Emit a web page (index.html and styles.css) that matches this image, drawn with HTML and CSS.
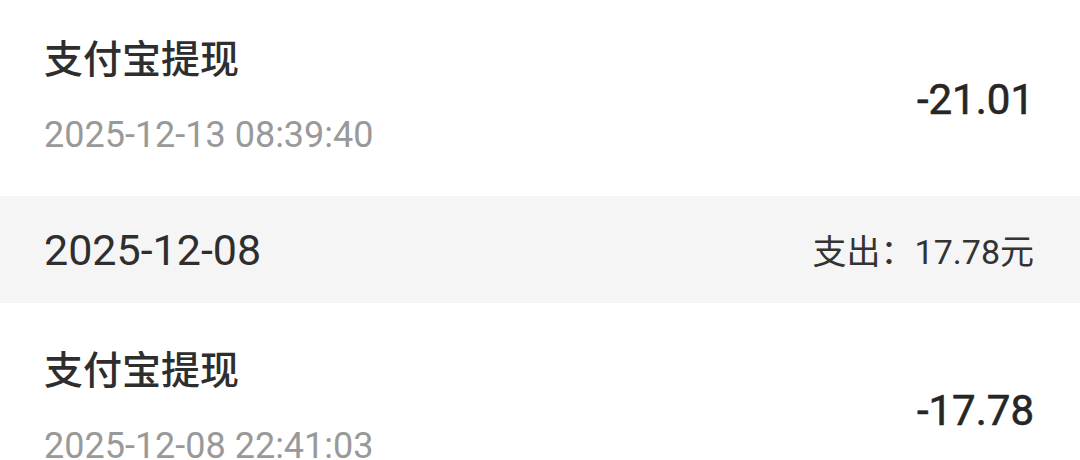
FILE: index.html
```html
<!DOCTYPE html>
<html lang="zh-CN">
<head>
  <meta charset="UTF-8" />
  <meta name="viewport" content="width=device-width, initial-scale=1.0"/>
  <title>账单明细</title>
  <link rel="stylesheet" href="styles.css">
</head>
<body>
  <div class="bill-list">
    <div class="bill-item">
      <div class="bill-info">
        <div class="bill-title">支付宝提现</div>
        <div class="bill-time">2025-12-13 08:39:40</div>
      </div>
      <div class="bill-amount">-21.01</div>
    </div>

    <div class="day-header">
      <div class="day-date">2025-12-08</div>
      <div class="day-total">支出：17.78元</div>
    </div>

    <div class="bill-item">
      <div class="bill-info">
        <div class="bill-title">支付宝提现</div>
        <div class="bill-time">2025-12-08 22:41:03</div>
      </div>
      <div class="bill-amount">-17.78</div>
    </div>
  </div>
</body>
</html>
```

FILE: styles.css
```css
body {
  margin: 0;
  background: #fff;
  font-family: Roboto, "Noto Sans CJK SC", sans-serif;
  color: #333;
  overflow: hidden;
}
.bill-list {
  margin-top: -8px;
}
.bill-item {
  display: flex;
  align-items: center;
  justify-content: space-between;
  padding: 43px 46px 39px 44px;
}
.bill-title {
  font-size: 39px;
  line-height: 50px;
  font-weight: 500;
  color: #2e2e2e;
}
.bill-time {
  margin-top: 28px;
  font-size: 36px;
  line-height: 44px;
  color: #999;
}
.bill-amount {
  font-size: 42px;
  font-weight: 400;
  color: #262626;
  margin-top: 6px;
  -webkit-text-stroke: 0.6px #262626;
}
.day-header {
  display: flex;
  align-items: center;
  justify-content: space-between;
  height: 107px;
  padding: 0 46px 0 44px;
  background: #f5f5f5;
}
.day-date {
  font-size: 43px;
  color: #2e2e2e;
}
.day-total {
  font-size: 34px;
  color: #333;
}
```
